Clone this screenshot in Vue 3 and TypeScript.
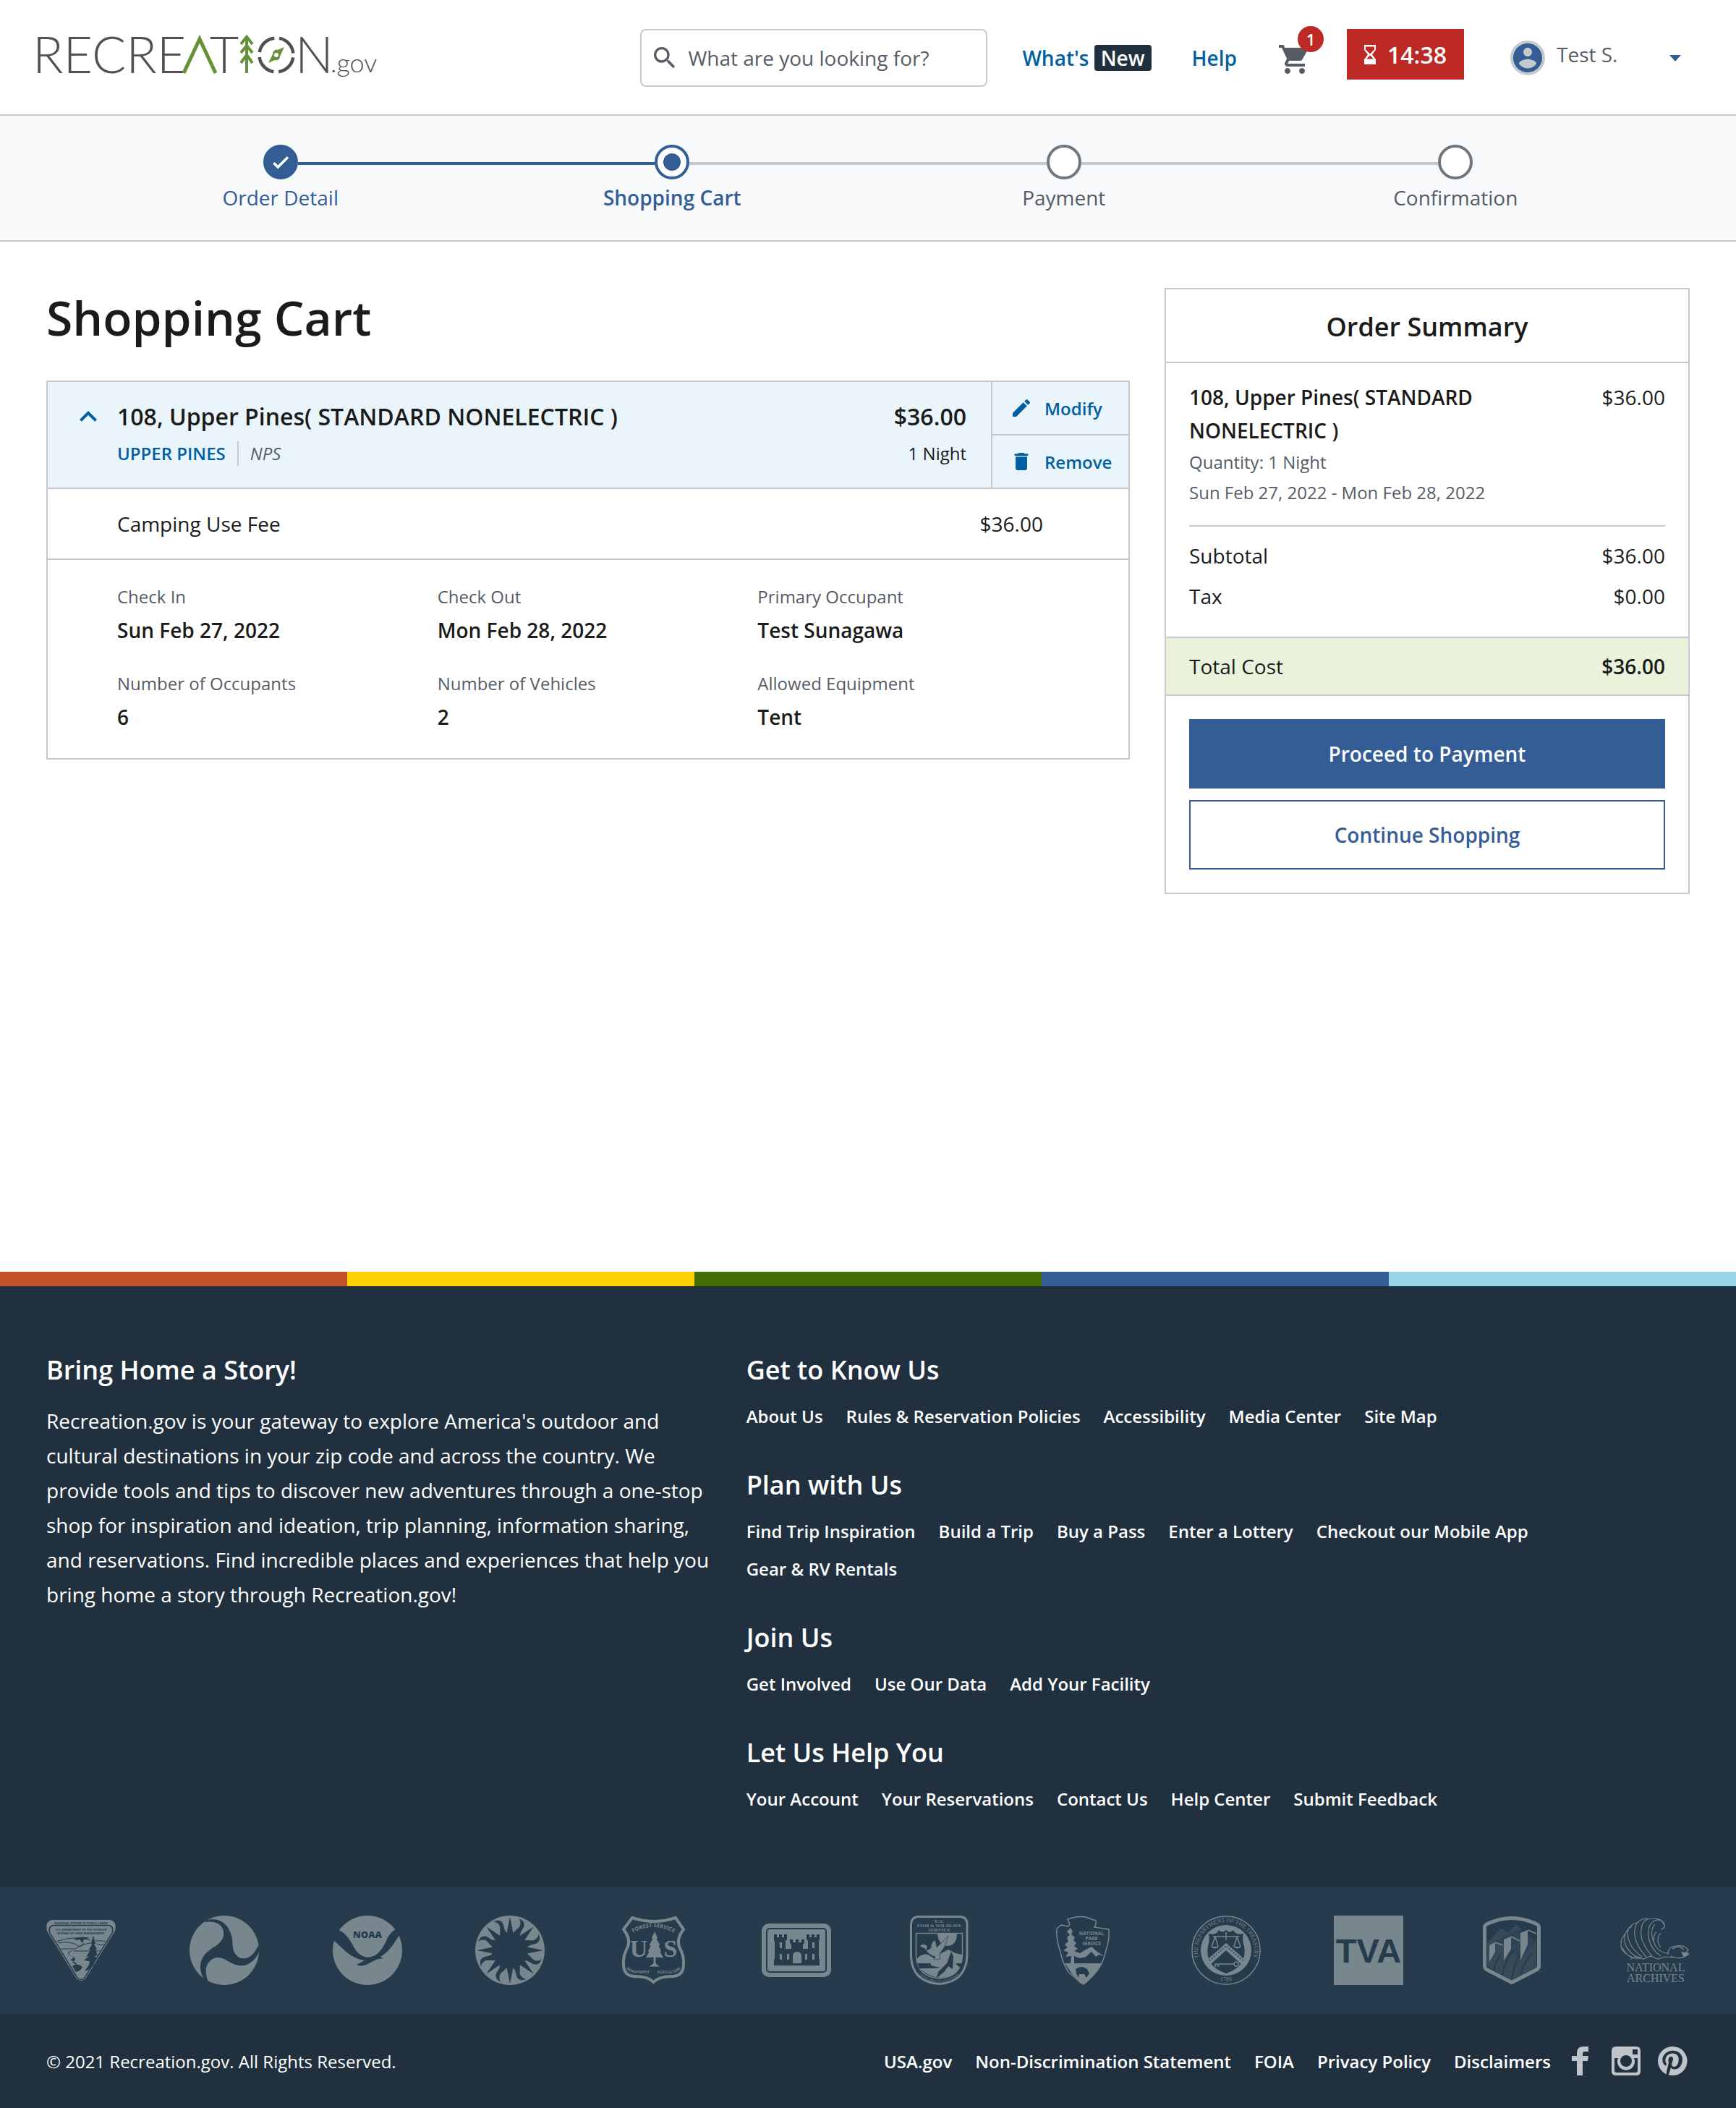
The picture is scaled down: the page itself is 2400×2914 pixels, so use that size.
<script setup lang="ts">
import { ref } from 'vue'

type StepState = 'done' | 'current' | 'todo'

interface Step {
  label: string
  state: StepState
}

const steps: Step[] = [
  { label: 'Order Detail', state: 'done' },
  { label: 'Shopping Cart', state: 'current' },
  { label: 'Payment', state: 'todo' },
  { label: 'Confirmation', state: 'todo' },
]

const details = [
  { label: 'Check In', value: 'Sun Feb 27, 2022' },
  { label: 'Check Out', value: 'Mon Feb 28, 2022' },
  { label: 'Primary Occupant', value: 'Test Sunagawa' },
  { label: 'Number of Occupants', value: '6' },
  { label: 'Number of Vehicles', value: '2' },
  { label: 'Allowed Equipment', value: 'Tent' },
]

const linkGroups = [
  {
    title: 'Get to Know Us',
    links: ['About Us', 'Rules & Reservation Policies', 'Accessibility', 'Media Center', 'Site Map'],
  },
  {
    title: 'Plan with Us',
    links: [
      'Find Trip Inspiration',
      'Build a Trip',
      'Buy a Pass',
      'Enter a Lottery',
      'Checkout our Mobile App',
      'Gear & RV Rentals',
    ],
  },
  { title: 'Join Us', links: ['Get Involved', 'Use Our Data', 'Add Your Facility'] },
  {
    title: 'Let Us Help You',
    links: ['Your Account', 'Your Reservations', 'Contact Us', 'Help Center', 'Submit Feedback'],
  },
]

const legalLinks = ['USA.gov', 'Non-Discrimination Statement', 'FOIA', 'Privacy Policy', 'Disclaimers']
const rayAngles = [0, 45, 90, 135, 180, 225, 270, 315]

const search = ref('')
const open = ref(true)
</script>

<template>
  <div class="page">
    <header class="topbar">
      <a class="logo" href="#" aria-label="Recreation.gov home">
        <svg width="490" height="90" viewBox="0 -10 490 90">
          <g class="logo-type">
            <text x="1" y="61">RECRE</text>
            <text x="266" y="61" text-anchor="middle">T</text>
            <text x="364" y="61">N</text>
            <text class="logo-gov" x="413" y="60">.gov</text>
          </g>
          <path d="M210 61L232 14L254 61" fill="none" stroke="#64913a" stroke-width="5" />
          <path
            d="M297 10V61M289 21L297 11L305 21M289 33L297 23L305 33M289 47L297 36L305 47"
            fill="none"
            stroke="#64913a"
            stroke-width="4"
          />
          <circle
            cx="338"
            cy="36"
            r="23.5"
            fill="none"
            stroke="#505050"
            stroke-width="4.5"
            stroke-dasharray="29.9 7"
            stroke-dashoffset="-3.5"
          />
          <path
            d="M349 25L343 38C343 42 340 44 336 43L327 47L333 35C333 31 336 28 340 29ZM338 33A3 3 0 1 0 338 39A3 3 0 1 0 338 33Z"
            fill="#64913a"
            fill-rule="evenodd"
          />
        </svg>
      </a>

      <div class="search">
        <svg width="40" height="40" viewBox="0 0 24 24" fill="#565c65">
          <path
            d="M15.5 14h-.79l-.28-.27A6.47 6.47 0 0 0 16 9.5 6.5 6.5 0 1 0 9.5 16c1.61 0 3.09-.59 4.23-1.57l.27.28v.79l5 4.99L20.49 19l-4.99-5zm-6 0C7.01 14 5 11.99 5 9.5S7.01 5 9.5 5 14 7.01 14 9.5 11.99 14 9.5 14z"
          />
        </svg>
        <input v-model="search" type="search" aria-label="Search" placeholder="What are you looking for?" />
      </div>

      <nav class="topnav">
        <a href="#">What's <span class="new">New</span></a>
        <a href="#">Help</a>
      </nav>

      <a class="cart" href="#" aria-label="Cart, 1 item">
        <svg width="48" height="48" viewBox="0 0 24 24" fill="#565c65">
          <path
            d="M7 18c-1.1 0-1.99.9-1.99 2S5.9 22 7 22s2-.9 2-2-.9-2-2-2zM1 2v2h2l3.6 7.59-1.35 2.45c-.16.28-.25.61-.25.96 0 1.1.9 2 2 2h12v-2H7.42c-.14 0-.25-.11-.25-.25l.03-.12.9-1.63h7.45c.75 0 1.41-.41 1.75-1.03l3.58-6.49A1 1 0 0 0 20 4H5.21l-.94-2H1zm16 16c-1.1 0-1.99.9-1.99 2s.89 2 1.99 2 2-.9 2-2-.9-2-2-2z"
          />
        </svg>
        <span class="count">1</span>
      </a>

      <div class="timer">
        <svg width="16" height="27" viewBox="0 0 16 27">
          <path
            d="M0 0H16V7L11 13.500L16 20V27H0V20L5 13.500L0 7ZM2 2.500V6.500L8 12.500L14 6.500V2.500ZM8 14.500L3 19.500H13Z"
            fill="#fff"
            fill-rule="evenodd"
          />
        </svg>
        <span>14:38</span>
      </div>

      <button class="user" type="button">
        <span class="avatar">
          <svg width="48" height="48" viewBox="0 0 24 24" fill="#345d96">
            <path
              d="M12 2C6.480 2 2 6.480 2 12s4.480 10 10 10 10-4.480 10-10S17.520 2 12 2zm0 3c1.660 0 3 1.340 3 3s-1.340 3-3 3-3-1.340-3-3 1.340-3 3-3zm0 14.200c-2.500 0-4.710-1.280-6-3.220.03-1.990 4-3.080 6-3.080 1.990 0 5.970 1.090 6 3.080-1.290 1.940-3.500 3.220-6 3.220z"
            />
          </svg>
        </span>
        <span class="user-name">Test S.</span>
        <svg class="caret" width="16" height="9" viewBox="0 0 16 9"><path d="M0 0H16L8 9Z" fill="#345d96" /></svg>
      </button>
    </header>

    <ol class="stepper">
      <li v-for="step in steps" :key="step.label" class="step" :class="step.state">
        <div class="track">
          <span class="line before"></span>
          <span class="dot">
            <svg v-if="step.state === 'done'" width="30" height="30" viewBox="0 0 24 24" fill="#fff">
              <path d="M9 15.600L5.300 11.900l-2 2L9 19.600 21 7.600l-2-2z" />
            </svg>
          </span>
          <span class="line after"></span>
        </div>
        <span class="step-label">{{ step.label }}</span>
      </li>
    </ol>

    <main class="content">
      <section class="cart-col">
        <h1>Shopping Cart</h1>
        <article class="item">
          <div class="item-head">
            <button class="toggle" type="button" aria-label="Toggle details" :aria-expanded="open" @click="open = !open">
              <svg width="48" height="48" viewBox="0 0 24 24" fill="#005ea2">
                <path d="M7.410 15.410L12 10.830l4.590 4.580L18 14l-6-6-6 6z" />
              </svg>
            </button>
            <div class="item-name">
              <h2>108, Upper Pines( STANDARD NONELECTRIC )</h2>
              <p class="place"><a href="#">UPPER PINES</a><em>NPS</em></p>
            </div>
            <div class="item-price">
              <strong>$36.00</strong>
              <span>1 Night</span>
            </div>
            <div class="actions">
              <button type="button">
                <svg width="32" height="32" viewBox="0 0 24 24" fill="#005ea2">
                  <path
                    d="M3 17.250V21h3.750L17.810 9.940l-3.750-3.750L3 17.250zM20.710 7.040a1 1 0 0 0 0-1.410l-2.340-2.340a1 1 0 0 0-1.410 0l-1.830 1.830 3.750 3.750 1.830-1.830z"
                  />
                </svg>
                Modify
              </button>
              <button type="button">
                <svg width="32" height="32" viewBox="0 0 24 24" fill="#005ea2">
                  <path d="M6 19c0 1.100.9 2 2 2h8c1.100 0 2-.9 2-2V7H6v12zM19 4h-3.500l-1-1h-5l-1 1H5v2h14V4z" />
                </svg>
                Remove
              </button>
            </div>
          </div>
          <div class="fee"><span>Camping Use Fee</span><span>$36.00</span></div>
          <dl v-show="open" class="details">
            <div v-for="d in details" :key="d.label">
              <dt>{{ d.label }}</dt>
              <dd>{{ d.value }}</dd>
            </div>
          </dl>
        </article>
      </section>

      <aside class="summary">
        <h2>Order Summary</h2>
        <div class="summary-body">
          <div class="summary-item">
            <div>
              <h3>108, Upper Pines( STANDARD NONELECTRIC )</h3>
              <p>Quantity: 1 Night</p>
              <p>Sun Feb 27, 2022 - Mon Feb 28, 2022</p>
            </div>
            <span class="amount">$36.00</span>
          </div>
          <div class="sums">
            <div class="row"><span>Subtotal</span><span>$36.00</span></div>
            <div class="row"><span>Tax</span><span>$0.00</span></div>
          </div>
        </div>
        <div class="row total"><span>Total Cost</span><strong>$36.00</strong></div>
        <div class="buttons">
          <button class="primary" type="button">Proceed to Payment</button>
          <button class="secondary" type="button">Continue Shopping</button>
        </div>
      </aside>
    </main>

    <footer class="footer">
      <div class="stripes"><i></i><i></i><i></i><i></i><i></i></div>
      <div class="footer-main">
        <section>
          <h2>Bring Home a Story!</h2>
          <p class="story">
            Recreation.gov is your gateway to explore America's outdoor and cultural destinations in your zip code and
            across the country. We provide tools and tips to discover new adventures through a one-stop shop for
            inspiration and ideation, trip planning, information sharing, and reservations. Find incredible places and
            experiences that help you bring home a story through Recreation.gov!
          </p>
        </section>
        <nav class="groups">
          <section v-for="g in linkGroups" :key="g.title">
            <h2>{{ g.title }}</h2>
            <ul>
              <li v-for="l in g.links" :key="l"><a href="#">{{ l }}</a></li>
            </ul>
          </section>
        </nav>
      </div>

      <div class="agencies">
        <!-- Bureau of Land Management -->
        <svg viewBox="0 0 96 96">
          <path class="fg" d="M7 6H89Q98 9 95 21L55 86Q48 94 41 86L1 21Q-2 9 7 6Z" />
          <path class="bg-line" d="M9 13.500H87Q94 16 91 24L53 86Q48 91 43 86L5 24Q2 16 9 13.500Z" stroke-width="1.500" />
          <g class="cut-text" text-anchor="middle" font-size="4" font-weight="700">
            <text x="48" y="11.500">NATIONAL SYSTEM OF PUBLIC LANDS</text>
            <text x="48" y="20.500">U.S. DEPARTMENT OF THE INTERIOR</text>
            <text x="48" y="26">BUREAU OF LAND MANAGEMENT</text>
          </g>
          <path
            class="bg-line"
            d="M14 36Q36 27 61 34M16 38Q34 34 46 43Q58 37 64 38M20 46H40L53 38M38 49H75M68 35Q76 34 82 36M70 39L80 41"
            stroke-width="1"
          />
          <path class="bg" d="M38 32Q48 28 60 31L52 33L50 38L46 33L42 34Z" />
          <path
            class="bg"
            d="M65 27L68 39L66 39L70 47L68 47L71 55L67 56L70 60L67 62L65 69L58 75L53 77L59 68L60 63L52 62L59 56L55 57L61 48L59 47L63 40L62 39ZM38 48Q26 52 35 56Q45 60 36 64Q38 67 44 68Q54 70 46 76L41 78L36 70L42 66L33 61Q42 58 32 55Q26 50 38 48Z"
          />
        </svg>
        <!-- Department of Transportation -->
        <svg viewBox="0 0 96 96">
          <circle class="fg" cx="48" cy="48" r="48" />
          <path
            class="bg"
            d="M22 7C37 2 50 8 56 22C62 36 57 45 64 54C72 64 88 60 95 41L97 48C90 66 76 72 64 68C52 64 45 55 34 59C22 64 20 78 26 91L20 88C14 78 13 66 19 57C27 44 44 42 47 28C49 16 40 6 22 9Z"
          />
        </svg>
        <!-- NOAA -->
        <svg viewBox="0 0 96 96">
          <circle class="fg" cx="48" cy="48" r="48" />
          <path
            class="bg"
            d="M8 20C21 25 26 39 32 48C38 56 46 59 53 57C62 55 68 47 73 37C77 28 79 24 88 18L93 26C86 35 80 49 66 57L70 59C60 60 56 63 50 66C44 70 38 70 33 68L44 62C30 60 20 52 13 45L0 33Z"
          />
          <text class="cut-text" x="48" y="31" text-anchor="middle" font-size="13" font-weight="800">NOAA</text>
        </svg>
        <!-- Smithsonian -->
        <svg viewBox="0 0 96 96">
          <circle class="fg" cx="48" cy="48" r="48" />
          <circle class="bg" cx="48" cy="48" r="25" />
          <g v-for="a in rayAngles" :key="a" :transform="`rotate(${a} 48 48)`">
            <path class="bg" d="M43 27L48 2L53 27Z" />
            <path
              class="bg"
              transform="rotate(22.500 48 48)"
              d="M43 26C44 17 50 14 47 8Q46 4 42 3Q51 2 53 9C54 15 50 18 54 26Z"
            />
          </g>
        </svg>
        <!-- Forest Service -->
        <svg viewBox="0 0 96 96">
          <path
            class="fg-line"
            d="M19 3Q49 13 79 3L90 19Q80 32 84 43Q91 56 90 67Q90 84 74 84Q56 84 48.500 92Q41 84 23 84Q7 84 7 67Q6 56 13 43Q17 32 7 19Z"
            stroke-width="4"
          />
          <path id="fs-top" d="M15 27Q48 5 82 27" fill="none" />
          <path id="fs-bottom" d="M11 73Q15 80 30 80H67Q82 80 86 73" fill="none" />
          <g class="fg" font-weight="700">
            <text font-size="7.500"><textPath href="#fs-top" startOffset="50%" text-anchor="middle">FOREST SERVICE</textPath></text>
            <text font-size="5"><textPath href="#fs-bottom">DEPARTMENT</textPath></text>
            <text font-size="5"><textPath href="#fs-bottom" startOffset="100%" text-anchor="end">AGRICULTURE</textPath></text>
            <g class="serif" font-size="34" text-anchor="middle">
              <text x="28" y="57">U</text>
              <text x="72" y="57">S</text>
            </g>
          </g>
          <path
            class="fg"
            stroke="#263b4c"
            d="M50 21L55 32L53 32L58 41L56 42L60 50L58 50L63 59L52 58L52 66L58 71H41L48 66L48 58L37 59L42 50L40 50L44 42L42 41L47 32L45 32Z"
          />
        </svg>
        <!-- Army Corps of Engineers -->
        <svg viewBox="0 0 96 96">
          <rect class="fg" y="11" width="96" height="74" rx="10" />
          <rect class="bg-line" x="7" y="18" width="82" height="60" rx="4" stroke-width="2" />
          <path
            class="bg"
            d="M17 26H21V30H24V26H28V30H31V26H35V34H33V46H41V40L39 38V33H43V37H47V33H51V37H55V33H59V38L57 40V46H64V34H62V26H66V30H69V26H73V30H76V26H80V34L79 36V60L80 61V69H17V61L18 60V36L17 34Z"
          />
          <path
            class="fg"
            d="M43 66V56Q43 50 49 50Q55 50 55 56V66ZM25 37H28V45H25ZM70 37H73V45H70ZM25 53H28V61H25ZM35 53H38V61H35ZM60 53H63V61H60ZM70 53H73V61H70Z"
          />
        </svg>
        <!-- Fish & Wildlife Service -->
        <svg viewBox="0 0 96 96">
          <path class="fg-line" d="M18 1.500H76Q86 2 86 12V56Q84 92 47.500 94.500Q10 92 8.500 56V12Q9 2 18 1.500Z" stroke-width="3" />
          <g class="fg serif" text-anchor="middle" font-weight="700" font-size="7">
            <text x="47.500" y="10">U.S.</text>
            <text x="47.500" y="16">FISH &amp; WILDLIFE</text>
            <text x="47.500" y="22">SERVICE</text>
          </g>
          <path class="fg-line" d="M15.500 24.500H79.500V56Q78 85 47.500 87Q17 84 15.500 56Z" stroke-width="1.500" />
          <path class="fg" d="M45 24H72Q72 41 59 42Q46 41 45 24ZM16 60Q24 52 32 54L42 60L50 52L60 47L70 52L79 54V62Q76 84 50 86Q32 85 20 72Z" />
          <path
            class="fg"
            stroke="#263b4c"
            stroke-width=".6"
            d="M20 42L26 39L31 42L30 48L36 45Q36 36 42 34L44 44L60 28L55 43L48 53L49 60L40 61L42 57Q32 54 28 46Z"
          />
          <path class="bg" d="M17 66H36L36 69L49 72L36 73H20ZM64 50L67 56L66 74L60 70L54 78L44 86L46 78L58 66ZM70 66H79L76 72Z" />
          <path id="fws-arc" d="M10 66Q20 91 47.500 92.500Q75 91 85 66" fill="none" />
          <text class="fg" font-size="4"><textPath href="#fws-arc" startOffset="50%" text-anchor="middle">DEPARTMENT OF THE INTERIOR</textPath></text>
        </svg>
        <!-- National Park Service -->
        <svg viewBox="0 0 96 96">
          <path
            class="fg-line"
            d="M27 5Q40 0 52 2L66 7Q67 13 64 16L84 19Q85 34 80 48Q76 66 68 76L55 90Q48 98 42 90L28 78Q20 66 17 50Q11 34 12 18L18 13L28 15L30 12Z"
            stroke-width="1.500"
          />
          <g class="fg" text-anchor="middle" font-weight="700" font-size="6.500">
            <text x="60" y="27">NATIONAL</text>
            <text x="60" y="34">PARK</text>
            <text x="60" y="41">SERVICE</text>
          </g>
          <path
            class="fg"
            d="M31 17L34 22L32 26L37 30L35 34L39 38L36 42L41 46L36 49L44 52L52 47L60 43L68 50L77 56L70 54L66 57L60 50L52 57L44 59L36 56L36 66H74L64 82L49 96L34 82L23 66H31L32 56L24 57L28 51L21 48L27 44L23 40L28 36L26 30L30 27L26 22Z"
          />
          <path class="bg" d="M38 74Q46 68 54 74L57 80L53 86L50 81H43L42 86L39 80Z" />
        </svg>
        <!-- Treasury -->
        <svg viewBox="0 0 96 96">
          <circle class="fg-line" cx="48" cy="48" r="47" stroke-width="1.500" />
          <circle class="fg" cx="48" cy="48" r="35" />
          <path id="ts-arc" d="M13.500 66A39 39 0 1 1 82.500 66" fill="none" />
          <g class="fg serif">
            <text font-size="8"><textPath href="#ts-arc" startOffset="50%" text-anchor="middle">THE DEPARTMENT OF THE TREASURY</textPath></text>
            <text x="48" y="91" font-size="8" text-anchor="middle">1789</text>
          </g>
          <path class="bg" d="M24 25Q34 28 38 20Q43 25 48 20Q53 25 58 20Q62 28 72 25Q70 34 73 42Q78 70 48 80Q18 70 23 42Q26 34 24 25Z" />
          <path
            class="fg-line"
            d="M48 23V34M30 29H66M33 29L28 43M33 29L37 43M63 29L59 43M63 29L68 43M32 67H60M33 67V71M37 67V71"
            stroke-width="1.500"
          />
          <path class="fg" d="M27 43H38Q33 48 27 43ZM58 43H69Q63 48 58 43ZM48 38L74 61L69 67L48 48L27 67L22 61Z" />
          <path class="bg-line" d="M25 62L48 42L71 62" stroke-width="2" stroke-dasharray="1.500 2.500" />
          <circle class="fg-line" cx="62" cy="67" r="3" stroke-width="1.500" />
        </svg>
        <!-- Tennessee Valley Authority -->
        <svg viewBox="0 0 96 96">
          <rect class="fg" width="96" height="96" />
          <text class="cut-text arial" x="48" y="65" text-anchor="middle" font-size="47" font-weight="700">TVA</text>
        </svg>
        <!-- Bureau of Reclamation -->
        <svg viewBox="0 0 96 96">
          <path fill="#374a5a" d="M14 38L34 17L42 24L54 13L82 36V72L48 90L14 70Z" />
          <path class="bg" d="M25 36L40 28L54 20L82 18V36L60 60Z" opacity=".5" />
          <path class="bg-line" d="M22 80Q26 62 34 52M34 86Q38 62 50 48M48 88Q52 60 66 46M60 82Q66 62 76 52" stroke-width="2" />
          <path class="fg" d="M17 41L25 37V50L17 64ZM37 33L47 29V46L37 62ZM60 24L70 20V40L60 62Z" />
          <path class="fg-line" d="M25 37L36 41M47 29L59 35M70 20L82 25" stroke-width="1.500" />
          <path
            class="fg-line"
            d="M10.500 16Q10.500 13 15 11Q32 3.500 48 3.500Q64 3.500 81 11Q85.500 13 85.500 16V70Q85.500 73 82 75L48 92.500L14 75Q10.500 73 10.500 70Z"
            stroke-width="5"
          />
        </svg>
        <!-- National Archives -->
        <svg viewBox="0 0 96 96">
          <path
            class="fg-line"
            stroke-width="1.200"
            d="M61 14Q58 3 45 4Q32 4 30 14Q24 34 44 56M56 19Q64 17 60 10Q54 3 46 8Q36 14 40 34Q44 48 56 56M38 4Q22 4 20 20Q18 38 36 57M26 9Q10 12 10 26Q12 44 30 57M16 15Q4 22 6 36Q10 52 28 60M8 24Q-2 34 2 46Q8 56 24 60M50 22Q42 32 50 44Q56 52 66 52M56 24Q48 34 56 44M48 12Q40 22 46 36M2 44Q10 56 16 58M14 60L24 57L32 60L42 56L52 60L62 57L78 58M66 54Q66 42 78 42Q90 40 94 48Q88 52 94 54Q82 62 70 56M72 46Q80 40 88 47"
          />
          <path class="fg" d="M84 50L96 52L88 58Z" />
          <g class="fg serif" text-anchor="middle" font-size="16">
            <text x="49" y="77">NATIONAL</text>
            <text x="49" y="92">ARCHIVES</text>
          </g>
        </svg>
      </div>

      <div class="legal">
        <span>© 2021 Recreation.gov. All Rights Reserved.</span>
        <ul>
          <li v-for="l in legalLinks" :key="l"><a href="#">{{ l }}</a></li>
        </ul>
        <div class="social">
          <a href="#" aria-label="Facebook">
            <svg viewBox="0 0 48 48">
              <path d="M36 4V11H31Q28 11 28 14V17H36L35 24H28V44H20V24H13V17H20V13Q20 4 29 4Z" />
            </svg>
          </a>
          <a href="#" aria-label="Instagram">
            <svg viewBox="0 0 48 48">
              <path
                fill-rule="evenodd"
                d="M10 4H38Q44 4 44 10V38Q44 44 38 44H10Q4 44 4 38V10Q4 4 10 4ZM33 8V15H40V8ZM8 20V37Q8 40 11 40H37Q40 40 40 37V20H35Q36 23 36 24A12 12 0 1 1 13 20ZM24 16A8 8 0 1 0 24 32A8 8 0 1 0 24 16Z"
              />
            </svg>
          </a>
          <a href="#" aria-label="Pinterest">
            <svg viewBox="0 0 48 48">
              <path
                d="M24 4a20 20 0 0 0-8 38.300c-.1-1.500 0-3.300.4-5l2.600-11s-.6-1.300-.6-3.200c0-3 1.700-5.200 3.900-5.200 1.800 0 2.700 1.400 2.700 3 0 1.900-1.200 4.600-1.800 7.200-.5 2.100 1.100 3.900 3.200 3.900 3.900 0 6.400-5 6.400-10.800 0-4.500-3-7.800-8.500-7.800-6.200 0-10 4.600-10 9.700 0 1.800.5 3 1.300 4 .4.500.4.700.3 1.200l-.4 1.600c-.1.500-.5.700-1 .5-2.800-1.200-4.200-4.300-4.200-7.800 0-5.800 4.900-12.800 14.600-12.800 7.800 0 13 5.700 13 11.700 0 8-4.500 14-11 14-2.200 0-4.300-1.200-5-2.500l-1.400 5.500c-.4 1.600-1.300 3.200-2.100 4.500A20 20 0 1 0 24 4z"
              />
            </svg>
          </a>
        </div>
      </div>
    </footer>
  </div>
</template>

<style>
body {
  background: #fff;
}
</style>

<style scoped>
* {
  box-sizing: border-box;
}
.page {
  font-family: 'Open Sans', 'Noto Sans', sans-serif;
  font-size: 28px;
  color: #1b1b1b;
}
h1,
h2,
h3,
p,
ul,
ol,
dl,
dd {
  margin: 0;
  padding: 0;
  list-style: none;
}
h1,
h2,
h3,
strong {
  font-weight: 600;
}
button {
  font: inherit;
  color: inherit;
  background: none;
  border: 0;
  padding: 0;
  cursor: pointer;
}
a {
  text-decoration: none;
  color: inherit;
}
svg {
  display: block;
  flex: none;
}

/* Top bar */
.topbar {
  display: flex;
  align-items: flex-start;
  padding: 40px 64px 38px 44px;
  border-bottom: 2px solid #c5c9ce;
}
.logo {
  margin-top: -10px;
}
.logo-type {
  font-family: Lato, sans-serif;
  font-weight: 300;
  font-size: 70px;
  fill: #505050;
}
.logo-gov {
  font-size: 36px;
}
.search {
  display: flex;
  align-items: center;
  gap: 12px;
  width: 480px;
  height: 80px;
  margin-left: auto;
  padding: 0 12px;
  border: 2px solid #c5c9ce;
  border-radius: 8px;
}
.search input {
  flex: 1;
  min-width: 0;
  padding: 0;
  border: 0;
  outline: 0;
  background: none;
  font: inherit;
}
.search input::placeholder {
  color: #565c65;
  opacity: 1;
}
.topnav {
  display: flex;
  align-items: center;
  gap: 56px;
  height: 80px;
  margin: 0 56px 0 48px;
  color: #005ea2;
  font-weight: 600;
}
.new {
  display: inline-block;
  padding: 0 9px;
  border-radius: 4px;
  background: #20303e;
  color: #fff;
  line-height: 36px;
}
.cart {
  position: relative;
  margin-top: 18px;
}
.count {
  position: absolute;
  top: -22px;
  left: 28px;
  width: 36px;
  border-radius: 18px;
  background: #bd2a25;
  color: #fff;
  font-size: 22px;
  font-weight: 600;
  line-height: 36px;
  text-align: center;
}
.timer {
  display: flex;
  align-items: center;
  justify-content: center;
  gap: 16px;
  width: 162px;
  height: 70px;
  margin-left: 48px;
  background: #bd2a25;
  color: #fff;
  font-size: 32px;
  font-weight: 600;
}
.user {
  display: flex;
  align-items: center;
  width: 248px;
  height: 80px;
  margin-left: 64px;
  padding-right: 12px;
}
.avatar {
  border-radius: 50%;
  background: #c5c9ce;
}
.user-name {
  margin-left: 16px;
  padding-bottom: 10px;
  color: #565c65;
}
.caret {
  margin-left: auto;
}

/* Progress */
.stepper {
  display: flex;
  padding: 40px 117px 34px;
  background: #f8f9fb;
  border-bottom: 2px solid #c5c9ce;
}
.step {
  flex: 1;
  text-align: center;
  color: #565c65;
}
.track {
  display: flex;
  align-items: center;
}
.line {
  flex: 1;
  height: 4px;
  margin-top: 4px;
  background: #c5c9ce;
}
.step:first-child .before,
.step:last-child .after {
  background: none;
}
.done .after,
.current .before {
  background: #345d96;
}
.dot {
  display: grid;
  place-items: center;
  width: 48px;
  height: 48px;
  border: 4px solid #71767a;
  border-radius: 50%;
  background: #fff;
}
.done .dot {
  border-color: #345d96;
  background: #345d96;
}
.current .dot {
  border-color: #345d96;
}
.current .dot::after {
  content: '';
  width: 24px;
  height: 24px;
  border-radius: 50%;
  background: #345d96;
}
.step-label {
  display: block;
  line-height: 50px;
}
.done,
.current {
  color: #345d96;
}
.current .step-label {
  font-weight: 600;
}

/* Cart */
.content {
  display: flex;
  align-items: flex-start;
  gap: 48px;
  padding: 64px 64px 522px;
}
.cart-col {
  flex: 1;
}
h1 {
  margin-bottom: 48px;
  font-size: 66px;
  line-height: 80px;
}
.item {
  border: 2px solid #c5c9ce;
}
.item-head {
  display: flex;
  background: #eaf5fb;
  border-bottom: 2px solid #c5c9ce;
}
.toggle {
  align-self: flex-start;
  margin: 24px 16px 0 32px;
}
.item-name,
.item-price {
  padding-top: 26px;
}
.item-name {
  flex: 1;
}
.item-name h2,
.item-price strong {
  display: block;
  margin-bottom: 12px;
  font-size: 32px;
  line-height: 44px;
}
.place {
  display: flex;
  font-size: 24px;
  line-height: 34px;
}
.place a {
  margin-right: 16px;
  padding-right: 16px;
  border-right: 2px solid #c5c9ce;
  color: #005ea2;
  font-weight: 600;
}
.place em {
  color: #565c65;
}
.item-price {
  padding-right: 34px;
  font-size: 24px;
  line-height: 34px;
  text-align: right;
}
.actions {
  display: flex;
  flex-direction: column;
  width: 190px;
  border-left: 2px solid #c5c9ce;
}
.actions button {
  display: flex;
  align-items: center;
  gap: 16px;
  height: 72px;
  padding-left: 24px;
  color: #005ea2;
  font-size: 24px;
  font-weight: 600;
}
.actions button + button {
  height: 74px;
  border-top: 2px solid #c5c9ce;
}
.fee {
  display: flex;
  justify-content: space-between;
  padding: 0 118px 0 96px;
  border-bottom: 2px solid #c5c9ce;
  line-height: 96px;
}
.details {
  display: grid;
  grid-template-columns: repeat(3, 1fr);
  row-gap: 28px;
  padding: 32px 70px 30px 96px;
}
.details dt {
  color: #565c65;
  font-size: 24px;
  line-height: 38px;
}
.details dd {
  font-weight: 600;
  line-height: 54px;
}

/* Summary */
.summary {
  width: 726px;
  border: 2px solid #c5c9ce;
}
.summary > h2 {
  padding-top: 4px;
  border-bottom: 2px solid #c5c9ce;
  font-size: 36px;
  line-height: 96px;
  text-align: center;
}
.summary-body {
  padding: 24px 32px 28px;
}
.summary-item {
  display: flex;
  justify-content: space-between;
  gap: 100px;
  padding-bottom: 24px;
  border-bottom: 2px solid #c5c9ce;
}
.summary-item h3,
.amount {
  font-size: 28px;
  line-height: 46px;
}
.summary-item p {
  color: #565c65;
  font-size: 24px;
  line-height: 42px;
}
.sums {
  padding-top: 12px;
}
.row {
  display: flex;
  justify-content: space-between;
  line-height: 56px;
}
.total {
  padding: 0 32px;
  border: solid #c5c9ce;
  border-width: 2px 0;
  background: #e9f3db;
  line-height: 78px;
}
.buttons {
  display: grid;
  gap: 16px;
  padding: 32px;
}
.buttons button {
  height: 96px;
  border: 2px solid #345d96;
  color: #345d96;
  font-weight: 600;
}
.buttons .primary {
  background: #345d96;
  color: #fff;
}

/* Footer */
.footer {
  background: #20303e;
  color: #fff;
}
.stripes {
  display: flex;
}
.stripes i {
  flex: 1;
  height: 20px;
  background: #c3522b;
}
.stripes i:nth-child(2) {
  background: #fbd004;
}
.stripes i:nth-child(3) {
  background: #446e04;
}
.stripes i:nth-child(4) {
  background: #345d96;
}
.stripes i:nth-child(5) {
  background: #97d4ea;
}
.footer-main {
  display: grid;
  grid-template-columns: 5fr 7fr;
  gap: 36px;
  padding: 96px 64px 95px;
}
.footer-main h2 {
  font-size: 36px;
  line-height: 40px;
}
.story {
  margin-top: 26px;
  line-height: 48px;
}
.groups {
  display: grid;
  gap: 49px;
}
.groups ul {
  display: flex;
  flex-wrap: wrap;
  column-gap: 32px;
  margin-top: 18px;
  font-size: 24px;
  font-weight: 600;
  line-height: 52px;
}
.agencies {
  display: flex;
  justify-content: space-between;
  padding: 40px 64px;
  background: #263b4c;
}
.agencies svg {
  width: 96px;
  height: 96px;
}
.fg {
  fill: #78868e;
}
.bg {
  fill: #263b4c;
}
.fg-line {
  fill: none;
  stroke: #78868e;
}
.bg-line {
  fill: none;
  stroke: #263b4c;
}
.cut-text {
  fill: #263b4c;
}
.serif {
  font-family: 'Liberation Serif', serif;
}
.arial {
  font-family: 'Liberation Sans', sans-serif;
}
.legal {
  display: flex;
  align-items: center;
  height: 130px;
  padding: 0 64px;
  font-size: 24px;
}
.legal ul {
  display: flex;
  gap: 32px;
  margin: 0 16px 0 auto;
  font-weight: 600;
}
.social {
  display: flex;
  gap: 16px;
}
.social svg {
  width: 48px;
  height: 48px;
  fill: #bfc4c8;
}
</style>
